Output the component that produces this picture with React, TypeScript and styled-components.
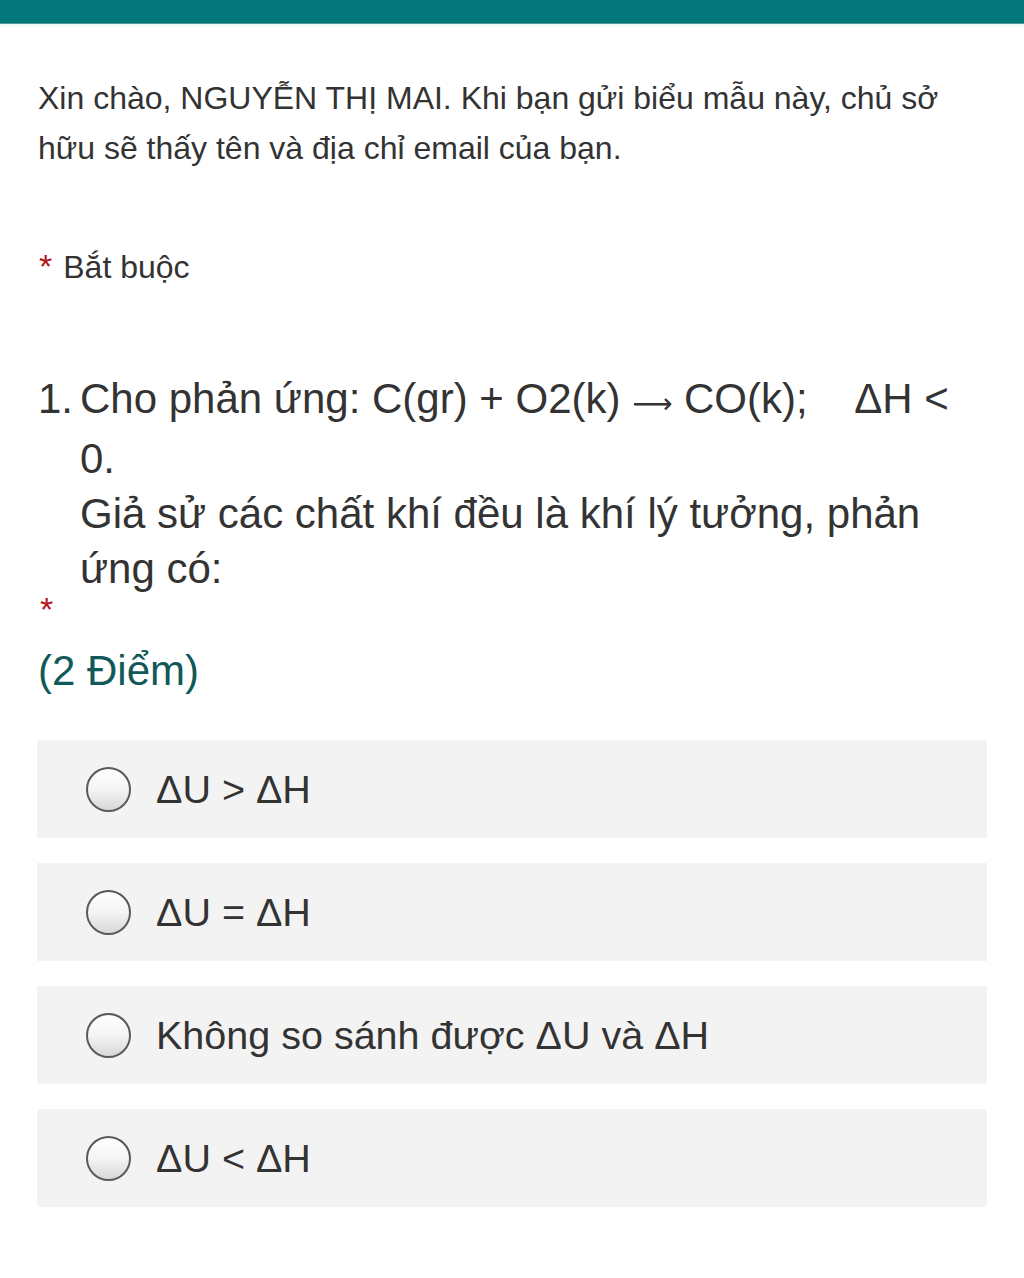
import React from 'react';
import styled, { createGlobalStyle } from 'styled-components';

const GlobalStyle = createGlobalStyle`
  html, body {
    margin: 0;
    padding: 0;
    background: #ffffff;
  }
  body {
    font-family: 'Liberation Sans', Arial, sans-serif;
    color: #333333;
  }
`;

const Page = styled.div`
  width: 1024px;
  min-height: 1278px;
  background: #ffffff;
`;

const TopBar = styled.div`
  height: 23px;
  background: #04777a;
  border-bottom: 1px solid #4f9a9b;
  box-shadow: 0 2px 4px rgba(4, 119, 122, 0.08);
`;

const Content = styled.div`
  padding: 0 37px;
`;

const Intro = styled.p`
  margin: 49px 0 0 1px;
  font-size: 32px;
  line-height: 50px;
  color: #333333;
`;

const Required = styled.div`
  margin-top: 73px;
  display: flex;
  align-items: baseline;
  gap: 11px;
  font-size: 32px;
  line-height: 40px;
`;

const Star = styled.span`
  color: #b3161c;
  font-size: 34px;
  padding-left: 2px;
`;

const Question = styled.div`
  margin-top: 84px;
  display: flex;
  font-size: 42px;
  line-height: 55px;
  color: #333333;
  white-space: nowrap;
`;

const QNumber = styled.span`
  width: 42px;
  flex-shrink: 0;
  padding-left: 1px;
`;

const QText = styled.div`
  flex: 1;
`;

const Arrow = styled.span`
  font-family: 'DejaVu Sans', sans-serif;
  font-size: 28px;
`;

const QStar = styled.div`
  color: #b3161c;
  font-size: 34px;
  line-height: 24px;
  margin-top: 1px;
  padding-left: 3px;
`;

const Points = styled.div`
  margin-top: 23px;
  font-size: 42px;
  line-height: 54px;
  color: #115859;
  padding-left: 1px;
`;

const Options = styled.div`
  margin-top: 42px;
  display: flex;
  flex-direction: column;
  gap: 25px;
`;

const Option = styled.label`
  display: flex;
  align-items: center;
  gap: 25px;
  height: 98px;
  background: #f3f3f3;
  padding-left: 49px;
  font-size: 39.5px;
  color: #333333;
`;

const Radio = styled.span`
  width: 41px;
  height: 41px;
  border-radius: 50%;
  border: 2px solid #5a5a5a;
  background: linear-gradient(180deg, #ffffff 0%, #f4f4f4 50%, #d8d8d8 100%);
  flex-shrink: 0;
`;

const choices = ['ΔU > ΔH', 'ΔU = ΔH', 'Không so sánh được ΔU và ΔH', 'ΔU < ΔH'];

export default function App() {
  return (
    <Page>
      <GlobalStyle />
      <TopBar />
      <Content>
        <Intro>
          Xin chào, NGUYỄN THỊ MAI. Khi bạn gửi biểu mẫu này, chủ sở
          <br />
          hữu sẽ thấy tên và địa chỉ email của bạn.
        </Intro>
        <Required>
          <Star>*</Star>
          <span>Bắt buộc</span>
        </Required>
        <Question>
          <QNumber>1.</QNumber>
          <QText>
            Cho phản ứng: C(gr) + O2(k) <Arrow>⟶</Arrow> CO(k);&nbsp;&nbsp;&nbsp; ΔH &lt;
            <br />
            0.
            <br />
            Giả sử các chất khí đều là khí lý tưởng, phản
            <br />
            ứng có:
          </QText>
        </Question>
        <QStar>*</QStar>
        <Points>(2 Điểm)</Points>
        <Options>
          {choices.map((c) => (
            <Option key={c}>
              <Radio />
              <span>{c}</span>
            </Option>
          ))}
        </Options>
      </Content>
    </Page>
  );
}
